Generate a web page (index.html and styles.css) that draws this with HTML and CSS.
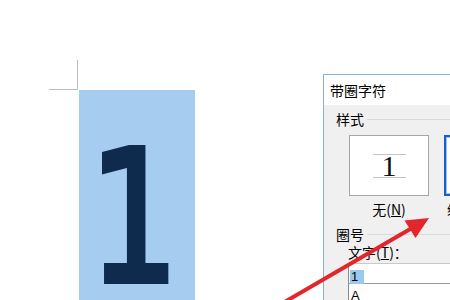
FILE: index.html
```html
<!DOCTYPE html>
<html lang="zh-CN">
<head>
<meta charset="utf-8">
<title>带圈字符</title>
<link rel="stylesheet" href="styles.css">
</head>
<body>
<div class="page">
  <div class="doc">
    <div class="corner"></div>
    <div class="sel"><span class="digit">1</span></div>
  </div>

  <div class="dialog">
    <div class="titlebar">带圈字符</div>
    <div class="body">
      <div class="group-head"><span>样式</span><i class="rule"></i></div>
      <div class="options">
        <div class="opt">
          <div class="box"><span class="line"></span><span class="glyph">1</span><span class="line"></span></div>
          <div class="lbl">无(<u>N</u>)</div>
        </div>
        <div class="opt">
          <div class="box active"></div>
          <div class="lbl">缩小文字(<u>S</u>)</div>
        </div>
      </div>
      <div class="group-head second"><span>圈号</span><i class="rule"></i></div>
      <div class="field">
        <div class="field-lbl">文字(<u>T</u>)：</div>
        <div class="input"><span class="hl">1</span></div>
        <div class="list"><div class="item">A</div></div>
      </div>
    </div>
  </div>

  <svg class="arrow" width="450" height="300" viewBox="0 0 450 300">
    <line x1="276" y1="307" x2="412" y2="228" stroke="#e3262b" stroke-width="4" stroke-linecap="round"/>
    <polygon points="429,218 404.5,220.5 415.5,238" fill="#e3262b"/>
  </svg>
</div>
</body>
</html>
```
FILE: styles.css
```css
html, body {
  margin: 0;
  padding: 0;
  background: #ffffff;
}
.page {
  position: relative;
  width: 450px;
  height: 300px;
  overflow: hidden;
  background: #ffffff;
  font-family: "Noto Sans CJK SC", "Liberation Sans", sans-serif;
}
.doc {
  padding: 60px 0 0 49px;
}
.corner {
  width: 28px;
  height: 29px;
  border-right: 1px solid #bdbdbd;
  border-bottom: 1px solid #bdbdbd;
}
.sel {
  margin-left: 30px;
  width: 116px;
  height: 220px;
  background: #a6cdf0;
  display: flex;
  justify-content: center;
  align-items: flex-start;
  overflow: hidden;
}
.digit {
  display: block;
  font-family: "DejaVu Sans", sans-serif;
  font-weight: 400;
  font-size: 182px;
  line-height: 1;
  color: #0e2a4c;
  -webkit-text-stroke: 6px #0e2a4c;
  margin-top: 37px;
  margin-left: -7px;
  transform: scaleX(0.78);
}
.dialog {
  position: absolute;
  left: 323px;
  top: 74px;
  width: 150px;
  height: 240px;
  border: 1px solid #86b0dc;
  background: #f0f0f0;
  font-size: 14px;
  color: #000;
}
.titlebar {
  height: 30px;
  line-height: 30px;
  padding-left: 6px;
  background: #ffffff;
  font-size: 14px;
}
.body {
  padding: 6px 0 0 12px;
}
.group-head {
  display: flex;
  align-items: center;
  height: 16px;
  line-height: 16px;
}
.group-head .rule {
  flex: 1;
  height: 1px;
  margin-left: 3px;
  background: #d9d9d9;
}
.group-head.second {
  margin-top: 9px;
}
.options {
  display: flex;
  gap: 15px;
  margin-top: 8px;
  padding-left: 13px;
}
.opt {
  display: flex;
  flex-direction: column;
  align-items: center;
  width: 80px;
  flex: none;
}
.box {
  box-sizing: border-box;
  width: 80px;
  height: 61px;
  background: #ffffff;
  border: 1px solid #a6a6a6;
  display: flex;
  flex-direction: column;
  align-items: center;
  justify-content: center;
}
.box .line {
  width: 33px;
  height: 1px;
  background: #c4c4c4;
}
.box .glyph {
  font-family: "Liberation Serif", serif;
  font-size: 30px;
  line-height: 22px;
  height: 22px;
  color: #111;
}
.box.active {
  border: 2px solid #1a5fcc;
  box-shadow: inset 0 0 0 1px #9cc3ef;
}
.lbl {
  margin-top: 5px;
  line-height: 16px;
  white-space: nowrap;
}
.field {
  padding-left: 12px;
  margin-top: 2px;
}
.field-lbl {
  line-height: 16px;
}
.input {
  margin-top: 3px;
  background: #ffffff;
  border-top: 1px solid #c9c9c9;
  border-left: 1px solid #8a8a8a;
  padding: 1px 0 0 1px;
  box-sizing: border-box;
  height: 20px;
}
.hl {
  display: inline-block;
  background: #99c9ef;
  font-family: "Liberation Sans", sans-serif;
  font-size: 13px;
  line-height: 14px;
  width: 13px;
  padding-left: 1px;
}
.list {
  background: #ffffff;
  border-top: 1px solid #9a9a9a;
  border-left: 1px solid #8a8a8a;
  height: 40px;
  padding: 5px 0 0 2px;
}
.item {
  font-family: "Liberation Sans", sans-serif;
  font-size: 13px;
  line-height: 14px;
}
.arrow {
  position: absolute;
  left: 0;
  top: 0;
}
```
